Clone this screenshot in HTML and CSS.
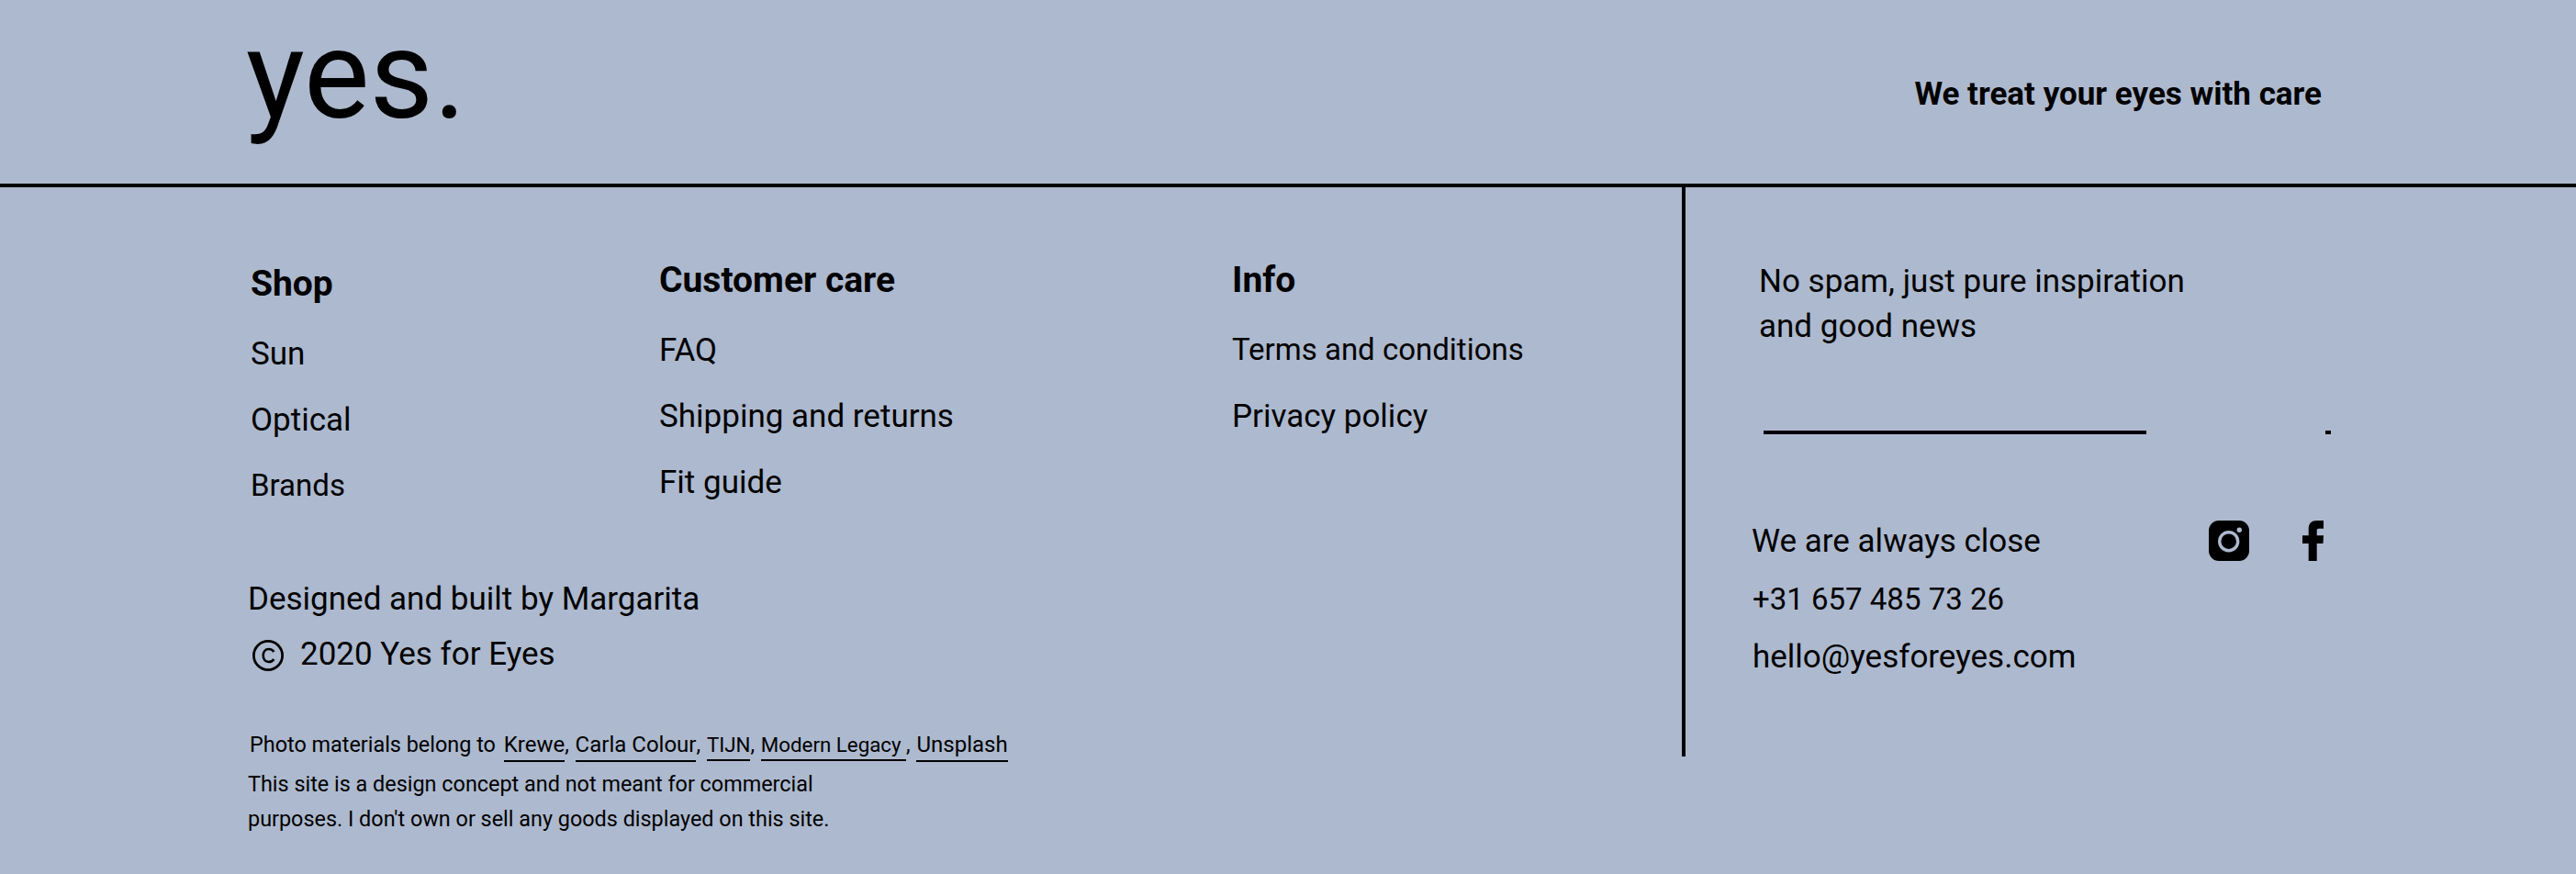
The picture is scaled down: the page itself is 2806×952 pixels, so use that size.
FILE: index.html
```html
<!DOCTYPE html>
<html lang="en">
<head>
  <meta charset="UTF-8" />
  <meta name="viewport" content="width=device-width, initial-scale=1.0" />
  <title>Yes for Eyes</title>
  <link rel="stylesheet" href="styles.css">
</head>
<body>

  <header class="top-bar">
    <div class="logo">yes.</div>
    <p class="tagline">We treat your eyes with care</p>
  </header>

  <footer class="footer">
    <div class="footer-left">
      <nav class="link-columns">
        <div class="link-col col-shop">
          <h3>Shop</h3>
          <a href="#">Sun</a>
          <a href="#">Optical</a>
          <a href="#" class="tight">Brands</a>
        </div>
        <div class="link-col col-care">
          <h3>Customer care</h3>
          <a href="#">FAQ</a>
          <a href="#">Shipping and returns</a>
          <a href="#">Fit guide</a>
        </div>
        <div class="link-col col-info">
          <h3>Info</h3>
          <a href="#" class="tight">Terms and conditions</a>
          <a href="#">Privacy policy</a>
        </div>
      </nav>

      <div class="credits">
        <p>Designed and built by Margarita</p>
        <p class="copyright">
          <svg class="copy-icon" viewBox="0 0 36 36" aria-hidden="true">
            <circle cx="18" cy="18" r="15.600" fill="none" stroke="#000" stroke-width="2.800"/>
            <path d="M24.300 14c-1.100-1.900-3.100-3-5.600-3-3.800 0-6 2.900-6 7s2.200 7 6 7c2.500 0 4.500-1.100 5.600-3" fill="none" stroke="#000" stroke-width="2.600"/>
          </svg>
          <span>2020 Yes for Eyes</span>
        </p>
      </div>

      <div class="notes">
        <p class="photo-line">Photo materials belong to <a href="#" class="first">Krewe</a>, <a href="#">Carla Colour</a>, <a href="#" class="small">TIJN</a>, <a href="#" class="small">Modern Legacy&nbsp;</a>, <a href="#">Unsplash</a></p>
        <p>This site is a design concept and not meant for commercial</p>
        <p>purposes. I don't own or sell any goods displayed on this site.</p>
      </div>
    </div>

    <div class="footer-right">
      <p class="news-text">No spam, just pure inspiration<br>and good news</p>
      <form class="news-form">
        <input type="text" class="news-input" aria-label="Email" />
        <span class="news-dot"></span>
      </form>
      <div class="contact">
        <div class="contact-top">
          <p>We are always close</p>
          <div class="socials">
            <svg class="insta" viewBox="0 0 44 44" aria-hidden="true">
              <rect width="44" height="44" rx="11" fill="#000"/>
              <circle cx="21.700" cy="22.700" r="10" fill="none" stroke="#adb9ce" stroke-width="3.400"/>
              <circle cx="33.300" cy="10.300" r="2.700" fill="#adb9ce"/>
            </svg>
            <svg class="fb" viewBox="0 0 23 44.300" aria-hidden="true">
              <path d="M6.700 44.300V25H0v-8.700h6.700V9C6.700 3 10 0 16 0h7v8.700h-5c-2 0-2.300 1-2.300 2.300v5.300H23l-.5 8.700h-6.800v19.300z" fill="#000"/>
            </svg>
          </div>
        </div>
        <p class="phone">+31 657 485 73 26</p>
        <p class="email">hello@yesforeyes.com</p>
      </div>
    </div>
  </footer>

</body>
</html>
```

FILE: styles.css
```css
* {
  box-sizing: border-box;
}
body {
  margin: 0;
  background: #adb9ce;
  color: #000;
  font-family: Roboto, sans-serif;
  font-size: 35px;
}
p, h3 {
  margin: 0;
}
a {
  color: #000;
  text-decoration: none;
}

.top-bar {
  display: flex;
  justify-content: space-between;
  align-items: center;
  height: 204px;
  padding: 0 277px 0 268px;
  border-bottom: 4px solid #000;
}
.logo {
  font-size: 135px;
  line-height: 1;
  margin-top: -36px;
}
.tagline {
  font-weight: 700;
  font-size: 35px;
  margin-top: 4px;
}

.footer {
  display: flex;
  align-items: flex-start;
}
.footer-left {
  width: 1832px;
  padding: 0 0 0 270px;
}
.link-columns {
  display: flex;
  height: 419px;
}
.link-col {
  display: flex;
  flex-direction: column;
  padding-top: 78px;
}
.link-col h3 {
  font-size: 39px;
  font-weight: 700;
  margin-bottom: 33px;
}
.link-col a {
  height: 72px;
}
.link-col .tight {
  font-size: 33px;
}
.col-shop {
  width: 448px;
  padding: 82px 0 0 3px;
}
.col-care {
  width: 624px;
}

.credits {
  line-height: 60px;
}
.copyright {
  display: flex;
  align-items: center;
  gap: 17px;
}
.copy-icon {
  width: 36px;
  height: 36px;
  margin: 2px 0 0 4px;
}
.notes {
  margin-top: 49px;
  font-size: 23.400px;
  line-height: 38px;
}
.photo-line {
  padding-left: 2px;
  margin-bottom: 5px;
}
.photo-line a {
  font-size: 24px;
  border-bottom: 2px solid #000;
  padding-bottom: 3px;
  margin-left: 1px;
}
.photo-line .first {
  margin-left: 3px;
}
.photo-line .small {
  font-size: 22.300px;
}

.footer-right {
  flex: 1;
  border-left: 4px solid #000;
  height: 620px;
  padding: 78px 0 0 80px;
}
.news-text {
  line-height: 49px;
}
.news-form {
  display: flex;
  justify-content: space-between;
  align-items: center;
  width: 618px;
  margin: 89px 0 0 5px;
}
.news-input {
  width: 417px;
  height: 4px;
  padding: 0;
  border: none;
  background: #000;
}
.news-dot {
  width: 6px;
  height: 4px;
  background: #000;
}
.contact {
  margin: 84px 0 0 -8px;
  line-height: 63px;
  width: 623px;
}
.contact-top {
  display: flex;
  justify-content: space-between;
  align-items: center;
  height: 64px;
}
.phone {
  font-size: 33px;
  padding-left: 1px;
}
.email {
  padding-left: 1px;
}
.socials {
  display: flex;
  align-items: center;
  gap: 58px;
}
.insta {
  width: 44px;
  height: 44px;
}
.fb {
  width: 23px;
  height: 44.300px;
}
```
